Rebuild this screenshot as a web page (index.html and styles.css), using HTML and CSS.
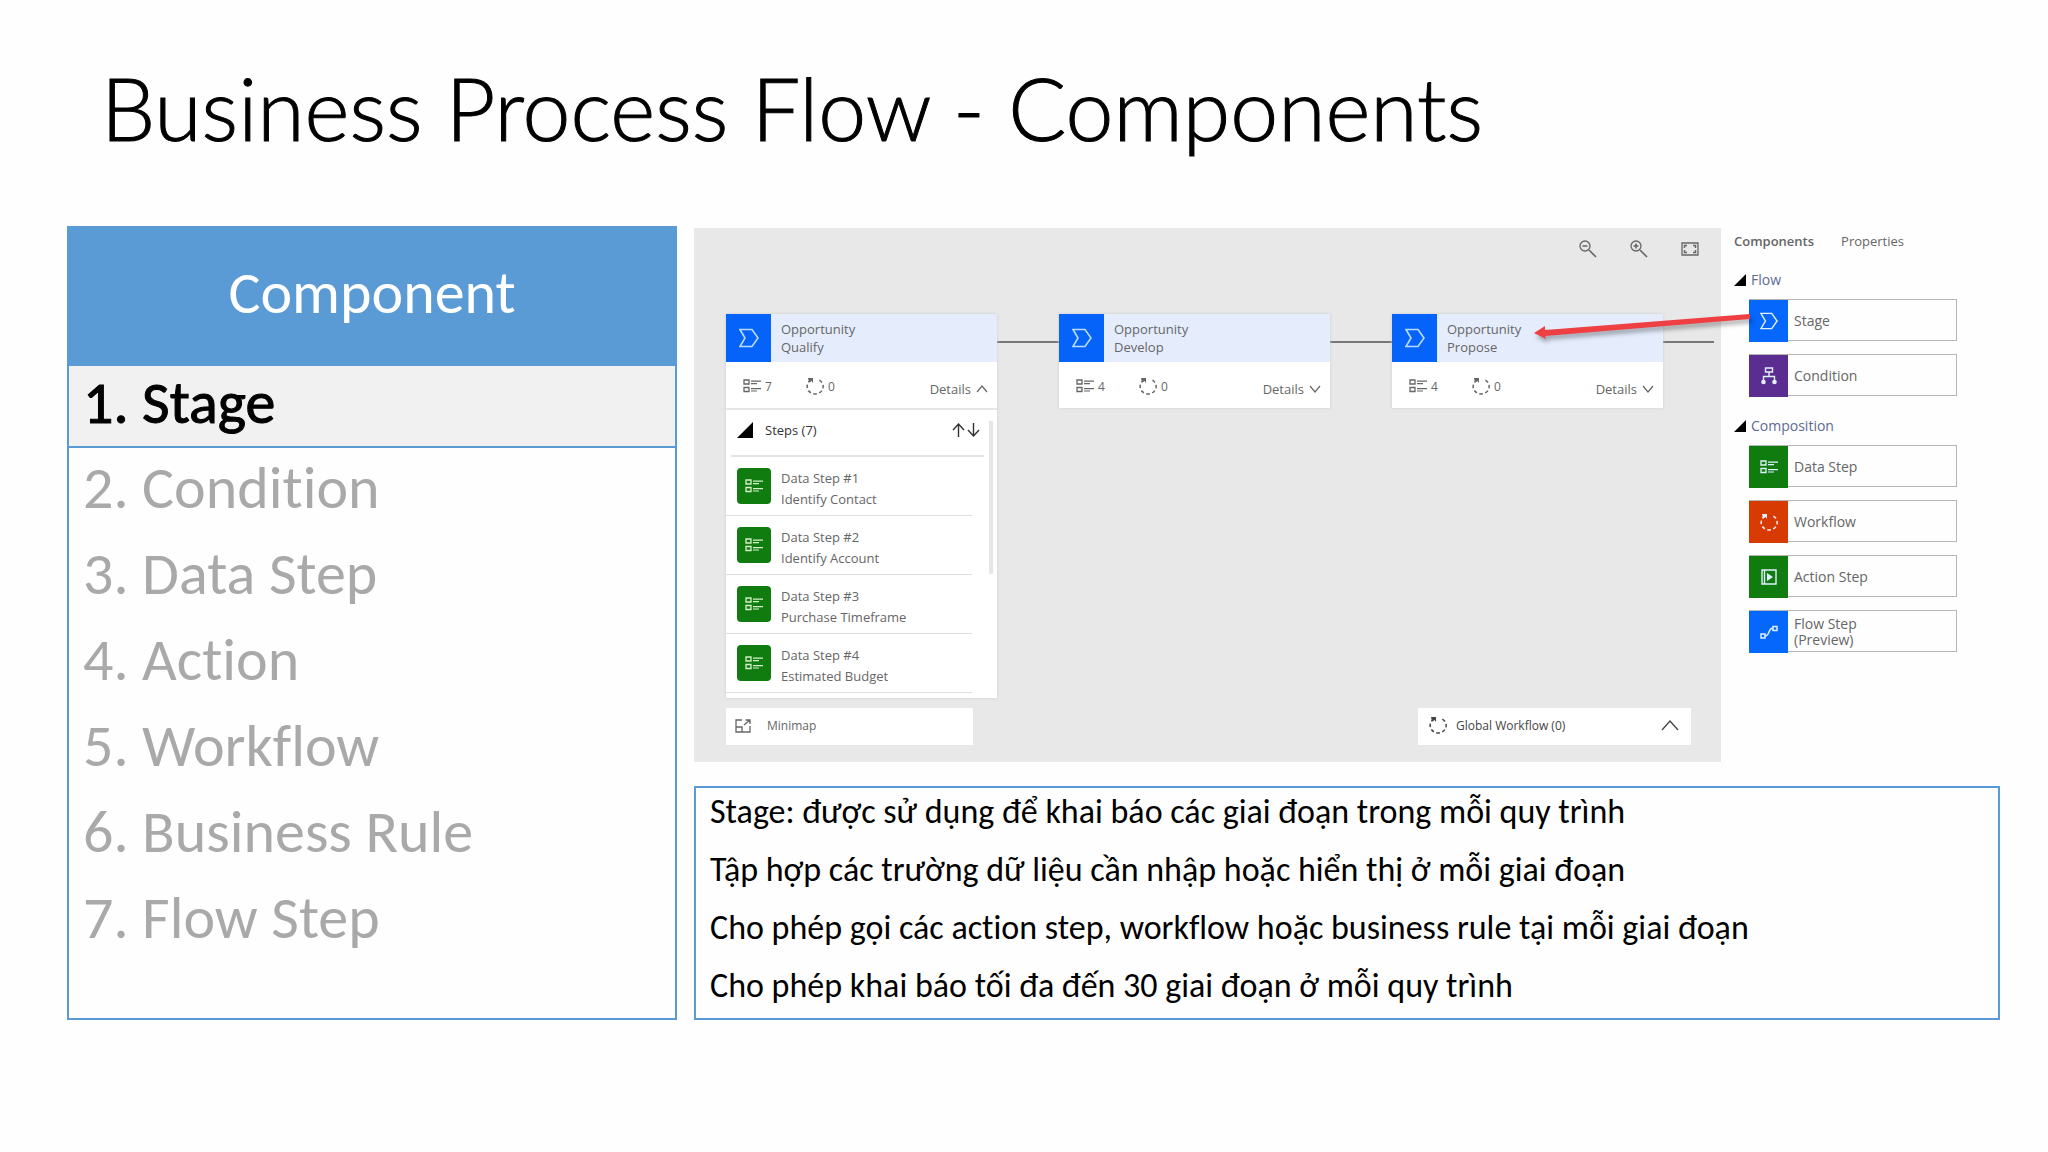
FILE: index.html
```html
<!DOCTYPE html>
<html lang="vi">
<head>
    <meta charset="UTF-8">
    <meta name="viewport" content="width=device-width, initial-scale=1.0">
    <title>Business Process Flow - Components</title>
    <link rel="stylesheet" href="styles.css">
</head>
<body>
    <!-- icons -->
    <svg class="sprite" aria-hidden="true">
        <symbol id="i-stage" viewBox="0 0 20 20">
            <path d="M1 1.500H13L19 10l-6 8.500H1L6 10z" fill="none" stroke="currentColor" stroke-width="1.600"/>
        </symbol>
        <symbol id="i-list" viewBox="0 0 18 14">
            <path d="M1 1h5v4H1zM1 8.500h5v4H1z" fill="none" stroke="currentColor" stroke-width="1.300"/>
            <path d="M8 2.200h10M8 4.600h6M8 9.700h10M8 12h6" stroke="currentColor" stroke-width="1.200"/>
        </symbol>
        <symbol id="i-loop" viewBox="0 0 18 18">
            <path d="M5 3A8 7.500 0 1 0 12 2.400" fill="none" stroke="currentColor" stroke-width="1.500" stroke-dasharray="3.500 2.500"/>
            <path d="M2 1h5v5L5.500 4 3 5.500z" fill="currentColor"/>
        </symbol>
        <symbol id="i-tree" viewBox="0 0 16 18">
            <path d="M4.500 1h7v4h-7zM8 5v4M2.500 14V9.500h11V14" fill="none" stroke="currentColor" stroke-width="1.400"/>
            <circle cx="2.500" cy="15" r="2.300" fill="currentColor"/>
            <circle cx="13.500" cy="15" r="2.300" fill="currentColor"/>
        </symbol>
        <symbol id="i-action" viewBox="0 0 16 16">
            <path d="M1 1h14v14H1zM3.500 1v14" fill="none" stroke="currentColor" stroke-width="1.400"/>
            <path d="M6 4l6 4-6 4z" fill="currentColor"/>
        </symbol>
        <symbol id="i-flow" viewBox="0 0 18 14">
            <path d="M1 9h4v4H1zM13 1.500h4v4h-4zM5 11c5 0 3-8 8-8" fill="none" stroke="currentColor" stroke-width="1.500"/>
        </symbol>
        <symbol id="i-up" viewBox="0 0 12 8">
            <path d="M1 7l5-6 5 6" fill="none" stroke="currentColor" stroke-width="1.200"/>
        </symbol>
        <symbol id="i-down" viewBox="0 0 12 8">
            <path d="M1 1l5 6 5-6" fill="none" stroke="currentColor" stroke-width="1.200"/>
        </symbol>
        <symbol id="i-corner" viewBox="0 0 16 16">
            <path d="M16 0v16H0z" fill="#000"/>
        </symbol>
    </svg>

    <h1>Business Process Flow - Components</h1>

    <main class="layout">
        <section class="components">
            <h2>Component</h2>
            <ol class="component-list">
                <li class="active">1. Stage</li>
                <li>2. Condition</li>
                <li>3. Data Step</li>
                <li>4. Action</li>
                <li>5. Workflow</li>
                <li>6. Business Rule</li>
                <li>7. Flow Step</li>
            </ol>
        </section>

        <div class="content">
            <section class="designer">
                <div class="canvas">
                    <div class="zoom-bar">
                        <button aria-label="Zoom out"><svg width="18" height="18" viewBox="0 0 18 18"><path d="M10 10l7 7M3.500 6h5" stroke="currentColor" stroke-width="1.600"/><circle cx="6" cy="6" r="5" fill="none" stroke="currentColor" stroke-width="1.300"/></svg></button>
                        <button aria-label="Zoom in"><svg width="18" height="18" viewBox="0 0 18 18"><path d="M10 10l7 7M3.500 6h5M6 3.500v5" stroke="currentColor" stroke-width="1.600"/><circle cx="6" cy="6" r="5" fill="none" stroke="currentColor" stroke-width="1.300"/></svg></button>
                        <button aria-label="Fit to canvas"><svg width="18" height="14" viewBox="0 0 18 14"><path d="M1 1h16v12H1z" fill="none" stroke="currentColor" stroke-width="1.300"/><path d="M3.500 6V3.500H6M12 3.500h2.500V6M3.500 8v2.500H6M12 10.500h2.500V8" fill="none" stroke="currentColor" stroke-width="1.500"/></svg></button>
                    </div>

                    <div class="flow">
                        <div class="stage">
                            <div class="stage-head">
                                <span class="stage-icon"><svg width="20" height="20"><use href="#i-stage"/></svg></span>
                                <p>Opportunity<br>Qualify</p>
                            </div>
                            <div class="stage-foot">
                                <span class="count"><svg width="18" height="14"><use href="#i-list"/></svg>7</span>
                                <span class="count"><svg width="18" height="18"><use href="#i-loop"/></svg>0</span>
                                <button class="details">Details<svg width="12" height="8"><use href="#i-up"/></svg></button>
                            </div>
                            <div class="steps">
                                <div class="steps-head">
                                    <svg width="16" height="16"><use href="#i-corner"/></svg>
                                    <span>Steps (7)</span>
                                    <svg class="sort" width="28" height="14" viewBox="0 0 28 14"><path d="M6.500 14V1M1 7l5.500-6L12 7M21.500 0v13M16 7l5.500 6L27 7" fill="none" stroke="currentColor" stroke-width="1.400"/></svg>
                                </div>
                                <ul class="step-list">
                                    <li><span class="step-icon"><svg width="18" height="14"><use href="#i-list"/></svg></span><p>Data Step #1<br>Identify Contact</p></li>
                                    <li><span class="step-icon"><svg width="18" height="14"><use href="#i-list"/></svg></span><p>Data Step #2<br>Identify Account</p></li>
                                    <li><span class="step-icon"><svg width="18" height="14"><use href="#i-list"/></svg></span><p>Data Step #3<br>Purchase Timeframe</p></li>
                                    <li><span class="step-icon"><svg width="18" height="14"><use href="#i-list"/></svg></span><p>Data Step #4<br>Estimated Budget</p></li>
                                </ul>
                                <span class="scroll-thumb"></span>
                            </div>
                        </div>
                        <span class="connector"></span>
                        <div class="stage">
                            <div class="stage-head">
                                <span class="stage-icon"><svg width="20" height="20"><use href="#i-stage"/></svg></span>
                                <p>Opportunity<br>Develop</p>
                            </div>
                            <div class="stage-foot">
                                <span class="count"><svg width="18" height="14"><use href="#i-list"/></svg>4</span>
                                <span class="count"><svg width="18" height="18"><use href="#i-loop"/></svg>0</span>
                                <button class="details">Details<svg width="12" height="8"><use href="#i-down"/></svg></button>
                            </div>
                        </div>
                        <span class="connector"></span>
                        <div class="stage">
                            <div class="stage-head">
                                <span class="stage-icon"><svg width="20" height="20"><use href="#i-stage"/></svg></span>
                                <p>Opportunity<br>Propose</p>
                            </div>
                            <div class="stage-foot">
                                <span class="count"><svg width="18" height="14"><use href="#i-list"/></svg>4</span>
                                <span class="count"><svg width="18" height="18"><use href="#i-loop"/></svg>0</span>
                                <button class="details">Details<svg width="12" height="8"><use href="#i-down"/></svg></button>
                            </div>
                            <!-- drag arrow from the Stage tile to this card -->
                            <svg class="arrow" width="216" height="32" viewBox="0 0 216 32"><path d="M216 0v5L11 22l1 3L0 19l11-7v4z" fill="#ee3f42"/></svg>
                        </div>
                        <span class="connector last"></span>
                    </div>

                    <div class="canvas-foot">
                        <button class="minimap">
                            <svg width="16" height="14" viewBox="0 0 16 14"><path d="M7 1H1v12h14V7M1 8h6v5M9 6l6-5M10.500 1H15v4" fill="none" stroke="currentColor" stroke-width="1.300"/></svg>
                            Minimap
                        </button>
                        <button class="global">
                            <svg width="18" height="18"><use href="#i-loop"/></svg>
                            Global Workflow (0)
                            <svg class="chevron" width="18" height="12" viewBox="0 0 18 12"><path d="M1 11l8-9 8 9" fill="none" stroke="currentColor" stroke-width="1.300"/></svg>
                        </button>
                    </div>
                </div>

                <aside class="palette">
                    <nav class="tabs">
                        <button class="selected">Components</button>
                        <button>Properties</button>
                    </nav>
                    <h3><svg width="12" height="12"><use href="#i-corner"/></svg>Flow</h3>
                    <div class="tiles">
                        <button class="tile"><span class="tile-icon blue"><svg width="18" height="18"><use href="#i-stage"/></svg></span>Stage</button>
                        <button class="tile"><span class="tile-icon purple"><svg width="16" height="18"><use href="#i-tree"/></svg></span>Condition</button>
                    </div>
                    <h3><svg width="12" height="12"><use href="#i-corner"/></svg>Composition</h3>
                    <div class="tiles">
                        <button class="tile"><span class="tile-icon green"><svg width="18" height="14"><use href="#i-list"/></svg></span>Data Step</button>
                        <button class="tile"><span class="tile-icon orange"><svg width="18" height="18"><use href="#i-loop"/></svg></span>Workflow</button>
                        <button class="tile"><span class="tile-icon green"><svg width="16" height="16"><use href="#i-action"/></svg></span>Action Step</button>
                        <button class="tile"><span class="tile-icon blue"><svg width="18" height="14"><use href="#i-flow"/></svg></span>Flow Step<br>(Preview)</button>
                    </div>
                </aside>
            </section>

            <section class="description">
                <p>Stage: được sử dụng để khai báo các giai đoạn trong mỗi quy trình</p>
                <p>Tập hợp các trường dữ liệu cần nhập hoặc hiển thị ở mỗi giai đoạn</p>
                <p>Cho phép gọi các action step, workflow hoặc business rule tại mỗi giai đoạn</p>
                <p>Cho phép khai báo tối đa đến 30 giai đoạn ở mỗi quy trình</p>
            </section>
        </div>
    </main>
</body>
</html>
```
FILE: styles.css
```css
* {
    margin: 0;
    padding: 0;
    box-sizing: border-box;
}

body {
    font-family: Carlito, Lato, "Open Sans", sans-serif;
    font-variant-ligatures: none;
    background-color: #fefefe;
    color: #000;
    padding: 52px 48px 40px 67px;
}

.sprite {
    display: none;
}

h1 {
    font-family: Lato, "Open Sans", sans-serif;
    font-size: 86px;
    font-weight: 300;
    line-height: 112px;
    padding-left: 34px;
    margin-bottom: 62px;
    -webkit-text-stroke: 1px #000;
}

.layout {
    display: grid;
    grid-template-columns: 610fr 1306fr;
    gap: 17px;
}

/* left column */
.components {
    display: flex;
    flex-direction: column;
    border: 2px solid #5b9bd5;
}

.components h2 {
    background-color: #5b9bd5;
    color: #fff;
    font-size: 60px;
    font-weight: 400;
    line-height: 130px;
    padding-bottom: 8px;
    text-align: center;
}

.component-list {
    list-style: none;
    font-size: 60px;
    line-height: 80px;
    color: #a9a9a9;
}

.component-list li {
    padding: 0 0 6px 14px;
}

.component-list .active {
    background-color: #f1f1f1;
    border-bottom: 2px solid #5b9bd5;
    color: #000;
    line-height: 74px;
    -webkit-text-stroke: 1px #000;
}

.content {
    display: flex;
    flex-direction: column;
    gap: 24px;
    min-width: 0;
}

/* process designer */
.designer {
    display: flex;
    padding-top: 2px;
    font-family: "Open Sans", sans-serif;
    font-size: 13px;
    color: #666;
}

.designer button {
    font: inherit;
    color: inherit;
    background: none;
    border: none;
    text-align: left;
    cursor: pointer;
}

.canvas {
    flex: 1;
    background-color: #e9e8e9;
    padding: 0 0 17px 32px;
}

.zoom-bar {
    display: flex;
    justify-content: flex-end;
    align-items: flex-start;
    gap: 33px;
    height: 86px;
    padding: 12px 22px 0 0;
}

.zoom-bar button {
    display: flex;
    align-items: center;
    height: 18px;
}

.flow {
    display: flex;
    align-items: flex-start;
}

.stage {
    position: relative;
    width: 271px;
    background-color: #fff;
    box-shadow: 0 0 3px #ccc;
}

.stage-head {
    display: flex;
    height: 48px;
    background-color: #e5edfd;
}

.stage-icon {
    display: flex;
    align-items: center;
    justify-content: center;
    width: 45px;
    background-color: #0563fa;
    color: #b8dcff;
}

.stage-head p {
    padding: 6px 0 0 10px;
    line-height: 18px;
}

.stage-foot {
    display: flex;
    align-items: center;
    height: 46px;
    padding: 2px 9px 0 17px;
}

.count {
    display: flex;
    align-items: center;
    gap: 4px;
    width: 63px;
    font-size: 12px;
}

.stage-foot .details {
    display: flex;
    align-items: center;
    gap: 5px;
    margin-left: auto;
    padding-top: 6px;
}

.connector {
    width: 62px;
    height: 2px;
    margin-top: 27px;
    background-color: #777;
}

.connector.last {
    width: 51px;
}

.arrow {
    position: absolute;
    top: 0;
    left: 142px;
    z-index: 1;
    filter: drop-shadow(2px 4px 2px rgba(0, 0, 0, 0.3));
}

.steps {
    position: relative;
    height: 290px;
    border-top: 2px solid #e6e6e6;
    overflow: hidden;
}

.steps-head {
    display: flex;
    align-items: center;
    gap: 12px;
    height: 47px;
    margin: 0 13px 0 5px;
    padding: 0 4px 5px 6px;
    border-bottom: 2px solid #e3e3e3;
    color: #333;
}

.sort {
    margin-left: auto;
}

.step-list {
    list-style: none;
    width: 246px;
}

.step-list li {
    display: flex;
    align-items: center;
    gap: 10px;
    height: 59px;
    padding-left: 11px;
    border-bottom: 1px solid #ddd;
    line-height: 21px;
}

.step-list p {
    padding-top: 5px;
}

.step-icon {
    display: flex;
    align-items: center;
    justify-content: center;
    width: 34px;
    height: 36px;
    border-radius: 4px;
    background-color: #107c10;
    color: #d5f0c8;
}

.scroll-thumb {
    position: absolute;
    top: 11px;
    right: 4px;
    width: 4px;
    height: 153px;
    background-color: #e6e6e6;
}

.canvas-foot {
    display: flex;
    justify-content: space-between;
    margin-top: 10px;
    padding-right: 30px;
    font-size: 12px;
}

.canvas-foot button {
    display: flex;
    align-items: center;
    height: 37px;
    padding-bottom: 2px;
    background-color: #fff;
}

.canvas-foot .minimap {
    width: 247px;
    gap: 16px;
    padding-left: 9px;
}

.canvas-foot .global {
    width: 273px;
    gap: 9px;
    padding: 0 12px 3px 11px;
    color: #444;
}

.chevron {
    margin-left: auto;
}

/* palette on the right */
.palette {
    width: 279px;
    padding: 0 43px 0 13px;
}

.tabs {
    display: flex;
    gap: 27px;
    line-height: 26px;
}

.tabs .selected {
    font-weight: 600;
}

.palette h3 {
    display: flex;
    align-items: center;
    gap: 5px;
    margin-top: 16px;
    font-size: 14px;
    font-weight: 400;
    line-height: 20px;
    color: #5c6b94;
}

.tiles {
    display: flex;
    flex-direction: column;
    gap: 13px;
    padding: 9px 0 4px 15px;
}

.designer .tile {
    display: grid;
    grid-template-columns: 38px 1fr;
    column-gap: 6px;
    align-items: center;
    height: 42px;
    padding-bottom: 1px;
    border: 1px solid #b5b5b5;
    font-size: 14px;
    line-height: 16px;
}

.tile-icon {
    display: flex;
    align-items: center;
    justify-content: center;
    height: 42px;
    margin: 0 0 -1px -1px;
    color: #dff0ff;
}

.blue {
    background-color: #0567fb;
}

.purple {
    background-color: #5c2d91;
}

.green {
    background-color: #107c10;
}

.orange {
    background-color: #d83b01;
}

/* description box */
.description {
    display: flex;
    flex-direction: column;
    gap: 10px;
    border: 2px solid #5b9bd5;
    padding: 0 14px 8px;
    font-size: 34px;
    line-height: 48px;
}
```
